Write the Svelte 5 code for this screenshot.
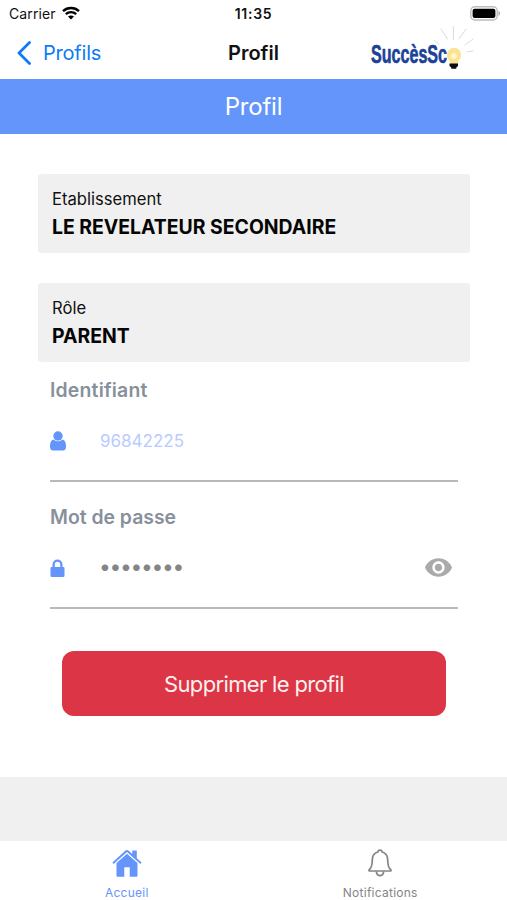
<script lang="ts">
	interface Card {
		label: string;
		value: string;
	}

	const cards: Card[] = [
		{ label: 'Etablissement', value: 'LE REVELATEUR SECONDAIRE' },
		{ label: 'Rôle', value: 'PARENT' }
	];

	let login = $state('96842225');
	let password = $state('parent25');
	let visible = $state(false);

	let shownPassword = $derived(visible ? password : '•'.repeat(password.length));
</script>

<div class="screen">
	<div class="status">
		<div class="carrier">
			<span class="carrier-name">Carrier</span>
			<svg class="wifi" viewBox="0 0 18 14" aria-hidden="true">
				<path d="M1 5.1C5.5.9 12.5.9 17 5.1M3.8 8.1c3-2.7 7.4-2.7 10.4 0" />
				<path class="wifi-dot" d="M6 10.6c1.8-1.5 4.2-1.5 6 0L9 13.6z" />
			</svg>
		</div>
		<span class="time">11:35</span>
		<svg class="battery" viewBox="0 0 31 15" aria-hidden="true">
			<rect x=".8" y=".8" width="26.4" height="13.2" rx="4" fill="#fff" stroke="#bcbcbc" stroke-width="1.4" />
			<rect x="2.6" y="2.7" width="22.8" height="9.4" rx="2" fill="#000" />
			<path d="M28.5 5c2 .5 2 4.3 0 4.8z" fill="#aaa" />
		</svg>
	</div>

	<header class="nav">
		<button class="back" type="button">
			<svg viewBox="0 0 14 24" aria-hidden="true"><path d="M12.5 1.5 2 12l10.5 10.5" /></svg>
			<span>Profils</span>
		</button>
		<h1>Profil</h1>
		<svg class="logo" viewBox="0 0 110 52" role="img" aria-label="SuccèsSco">
			<text x="6" y="35.500" textLength="76" lengthAdjust="spacingAndGlyphs">SuccèsSc</text>
			<g stroke="#d9dce3" stroke-width="1" stroke-linecap="round">
				<path d="m69 13 5 4M76 2l6.500 10M88.500-.5v13M101 2l-7 10M108 12l-8 6" />
				<path d="m102 25 6-1" />
			</g>
			<circle cx="89" cy="28" r="7.200" fill="#fbe391" />
			<path d="M84.500 32h9l-1 6h-7z" fill="#fbe391" />
			<circle cx="89" cy="29" r="3" fill="#fff4cc" />
			<path d="M84.500 36.500h8.500v2.600l-1.700 1.400v1.300h-5v-1.300l-1.800-1.400z" fill="#0b0b0b" />
		</svg>
	</header>

	<div class="banner">Profil</div>

	<main>
		{#each cards as card (card.label)}
			<section class="card">
				<span class="card-label">{card.label}</span>
				<strong class="card-value">{card.value}</strong>
			</section>
		{/each}

		<div class="field">
			<span class="field-label identifier">Identifiant</span>
			<div class="field-row">
				<svg class="user" viewBox="0 0 16 20" aria-hidden="true">
					<circle cx="8" cy="5" r="4.700" />
					<path d="M3.500 8.500C1 9 0 11.500 0 15.500 0 18 1 19.500 3 19.500h10c2 0 3-1.500 3-4 0-4-1-6.500-3.500-7-2.500 2.400-6.500 2.400-9 0z" />
				</svg>
				<span class="login">{login}</span>
			</div>
		</div>

		<div class="field">
			<span class="field-label passphrase">Mot de passe</span>
			<div class="field-row">
				<svg class="lock" viewBox="0 0 14 18" aria-hidden="true">
					<path d="M2 8V5.500a5 5 0 0 1 10 0V8h.8c.7 0 1.200.5 1.200 1.200v7.600c0 .7-.5 1.200-1.200 1.200H1.200C.5 18 0 17.500 0 16.800V9.200C0 8.500.5 8 1.200 8zm2.300 0h5.400V5.500a2.700 2.700 0 0 0-5.400 0z" />
				</svg>
				<span class="password" class:masked={!visible}>{shownPassword}</span>
				<button
					class="eye"
					type="button"
					aria-label="Afficher le mot de passe"
					onclick={() => (visible = !visible)}
				>
					<svg viewBox="1 4.500 22 15" aria-hidden="true">
						<path d="M12 4.500C7 4.500 2.730 7.610 1 12c1.730 4.390 6 7.500 11 7.500s9.270-3.110 11-7.500c-1.730-4.390-6-7.500-11-7.500zM12 17c-2.760 0-5-2.240-5-5s2.240-5 5-5 5 2.240 5 5-2.240 5-5 5zm0-8c-1.660 0-3 1.340-3 3s1.340 3 3 3 3-1.340 3-3-1.340-3-3-3z" />
					</svg>
				</button>
			</div>
		</div>

		<button class="delete" type="button"><span>Supprimer le profil</span></button>
	</main>

	<div class="spacer"></div>

	<nav class="tabs">
		<a class="tab active" href="#accueil">
			<svg class="home" viewBox="0 0 30 28" aria-hidden="true">
				<path d="M15 4.800 4.500 14v12.500c0 .8.5 1.300 1.300 1.300h6.500v-9.500h5.400v9.500h6.500c.8 0 1.300-.5 1.300-1.300V14z" />
				<path d="M.4 13.500 13.500 1.600c.9-.8 2.100-.8 3 0l3.800 3.500V1.500h4.500v7.700l4.800 4.300-1.200 1.400L15 2.900 1.600 14.900z" />
			</svg>
			<span>Accueil</span>
		</a>
		<a class="tab" href="#notifications">
			<svg class="bell" viewBox="0 0 24 28" aria-hidden="true">
				<path d="M12 1.200c-1.300 0-2 .8-2.200 1.800C6 4 4.300 7 4.300 11c0 5-.8 7.700-3 9.700-.6.600-.3 1.300.5 1.300h20.400c.8 0 1.100-.7.5-1.300-2.200-2-3-4.700-3-9.700 0-4-1.700-7-5.500-8-.2-1-.9-1.800-2.200-1.800z" />
				<path d="M8.300 22.300c.3 2.700 1.700 4.300 3.700 4.300s3.400-1.600 3.700-4.300" />
			</svg>
			<span>Notifications</span>
		</a>
	</nav>
</div>

<style>
	:global(body) {
		margin: 0;
		background: #fff;
	}

	.screen {
		display: flex;
		flex-direction: column;
		height: 900px;
		overflow: hidden;
		background: #fff;
		color: #111;
		font-family: Inter, 'Liberation Sans', sans-serif;
	}

	button {
		padding: 0;
		border: 0;
		background: none;
		font: inherit;
		cursor: pointer;
	}

	span,
	strong,
	h1 {
		white-space: nowrap;
	}

	.status {
		display: grid;
		grid-template-columns: 1fr auto 1fr;
		align-items: center;
		height: 27px;
		padding: 0 6px 0 9px;
		box-sizing: border-box;
		font-size: 14px;
	}

	.carrier {
		display: flex;
		align-items: center;
		gap: 6px;
	}

	.carrier-name {
		letter-spacing: 0.1px;
	}

	.time {
		margin-left: -3px;
		font-weight: 600;
		letter-spacing: 0.7px;
	}

	.wifi {
		width: 18px;
		height: 14px;
		margin-top: -2px;
		fill: none;
		stroke: #000;
		stroke-width: 2.4;
	}

	.wifi .wifi-dot {
		fill: #000;
		stroke: none;
	}

	.battery {
		justify-self: end;
		width: 31px;
		height: 15px;
	}

	.nav {
		display: grid;
		grid-template-columns: 1fr auto 1fr;
		align-items: center;
		height: 52px;
		padding: 0 32px 0 17px;
	}

	.back {
		display: flex;
		align-items: center;
		gap: 12px;
		color: #0d7bf5;
		font-size: 20px;
		letter-spacing: -0.2px;
	}

	.back svg {
		width: 14px;
		height: 24px;
		fill: none;
		stroke: currentColor;
		stroke-width: 2.8;
		stroke-linecap: round;
		stroke-linejoin: round;
	}

	h1 {
		margin: 0 -7px 0 8px;
		font-size: 20px;
		font-weight: 600;
	}

	.logo {
		justify-self: end;
		width: 110px;
		height: 52px;
		overflow: visible;
	}

	.logo text {
		fill: #1b4296;
		stroke: #1b4296;
		stroke-width: 0.6;
		font-family: 'Liberation Sans', sans-serif;
		font-size: 25px;
		font-weight: 700;
	}

	.banner {
		display: grid;
		place-items: center;
		height: 55px;
		background: #6495fb;
		color: #fff;
		font-size: 24px;
		letter-spacing: -0.2px;
	}

	main {
		display: flex;
		flex-direction: column;
		height: 643px;
		padding: 40px 37px 0 38px;
		box-sizing: border-box;
	}

	.card {
		display: flex;
		flex-direction: column;
		height: 79px;
		margin-bottom: 30px;
		padding: 12px 14px;
		box-sizing: border-box;
		border-radius: 3px;
		background: #f0f0f0;
	}

	.card + .card {
		margin-bottom: 0;
	}

	.card-label {
		font-size: 16.6px;
		line-height: 26px;
	}

	.card-value {
		color: #050505;
		font-size: 19.4px;
		line-height: 31px;
	}

	.field {
		height: 120px;
		margin: 0 12px 7px;
		box-sizing: border-box;
		border-bottom: 2px solid #b7b9bb;
	}

	.field-label {
		display: block;
		height: 54px;
		color: #87909c;
		font-size: 19.4px;
		font-weight: 600;
		line-height: 56px;
	}

	.identifier {
		letter-spacing: 0.2px;
	}

	.field-row {
		display: flex;
		align-items: center;
		height: 49px;
	}

	.user {
		width: 16px;
		height: 20px;
		fill: #6495fb;
	}

	.lock {
		width: 15px;
		height: 18px;
		fill: #6495fb;
	}

	.login {
		margin-left: 34px;
		color: #b9cbff;
		font-size: 17px;
	}

	.password {
		margin-left: 34px;
		color: #858585;
		font-size: 17px;
	}

	.password.masked {
		font-size: 21px;
		letter-spacing: -1.3px;
		line-height: 20px;
		transform: translateY(-1px);
	}

	.eye {
		display: flex;
		margin-left: auto;
		margin-right: 6px;
	}

	.eye svg {
		width: 27px;
		height: 19px;
		fill: #aaa;
	}

	.delete {
		height: 65px;
		margin: 35px 24px 0;
		border-radius: 12px;
		background: #dc3545;
		color: #fff0f0;
		font-size: 22px;
		letter-spacing: -0.65px;
	}

	.spacer {
		height: 64px;
		background: #f0f0f0;
	}

	.tabs {
		display: grid;
		grid-template-columns: 1fr 1fr;
		height: 59px;
	}

	.tab {
		display: flex;
		flex-direction: column;
		align-items: center;
		gap: 7px;
		padding-top: 8px;
		color: #858585;
		font-size: 12px;
		letter-spacing: 0.25px;
		line-height: 17px;
		text-decoration: none;
	}

	.tab.active {
		color: #6495fb;
	}

	.home {
		width: 30px;
		height: 28px;
		fill: currentColor;
	}

	.bell {
		width: 24px;
		height: 28px;
		fill: none;
		stroke: currentColor;
		stroke-width: 1.7;
	}
</style>
